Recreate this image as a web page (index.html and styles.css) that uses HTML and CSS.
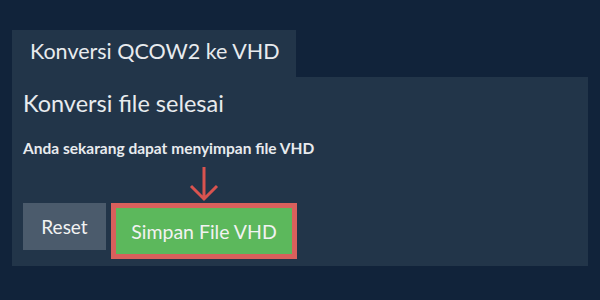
FILE: index.html
```html
<!DOCTYPE html>
<html lang="id">
<head>
  <meta charset="UTF-8">
  <title>Konversi QCOW2 ke VHD</title>
  <link rel="stylesheet" href="styles.css">
</head>
<body>
  <div class="tab">Konversi QCOW2 ke VHD</div>
  <div class="panel">
    <h2>Konversi file selesai</h2>
    <p class="note">Anda sekarang dapat menyimpan file VHD</p>
    <div class="actions">
      <button class="btn reset">Reset</button>
      <div class="save-wrap">
        <svg class="arrow" width="30" height="36" viewBox="0 0 30 36">
          <path d="M15 1 V33 M2 20 L15 33 L28 20" fill="none" stroke="#d9534f" stroke-width="3"/>
        </svg>
        <button class="btn save">Simpan File VHD</button>
      </div>
    </div>
  </div>
</body>
</html>
```

FILE: styles.css
```css
body {
  margin: 0;
  padding: 30px 12px 0;
  background-color: #11233a;
  font-family: Lato, "Noto Sans", sans-serif;
  color: #e8ebee;
}
.tab {
  display: inline-block;
  box-sizing: border-box;
  background-color: #223549;
  padding: 7px 0 0 18px;
  height: 47px;
  width: 284px;
  font-size: 21.5px;
  line-height: 28px;
  white-space: nowrap;
  vertical-align: top;
}
.panel {
  background-color: #223549;
  height: 189px;
  padding: 0 11px;
  box-sizing: border-box;
  width: 576px;
}
h2 {
  margin: 0;
  padding-top: 11px;
  font-size: 23.5px;
  font-weight: normal;
  line-height: 30px;
}
.note {
  margin: 20px 0 0;
  font-size: 15.5px;
  font-weight: bold;
  line-height: 20px;
}
.actions {
  display: flex;
  align-items: flex-start;
  gap: 5px;
  margin-top: 8px;
}
.btn {
  border: none;
  font-family: Lato, "Noto Sans", sans-serif;
  color: #f2f2f2;
  cursor: pointer;
}
.reset {
  margin-top: 37px;
  width: 83px;
  height: 47px;
  background-color: #4b5b6c;
  font-size: 19px;
}
.save-wrap {
  display: flex;
  flex-direction: column;
  align-items: center;
}
.arrow {
  display: block;
  margin-bottom: 1px;
}
.save {
  width: 186px;
  height: 56px;
  background-color: #5cb85c;
  border: 5px solid #d9605c;
  font-size: 19.5px;
}
```
